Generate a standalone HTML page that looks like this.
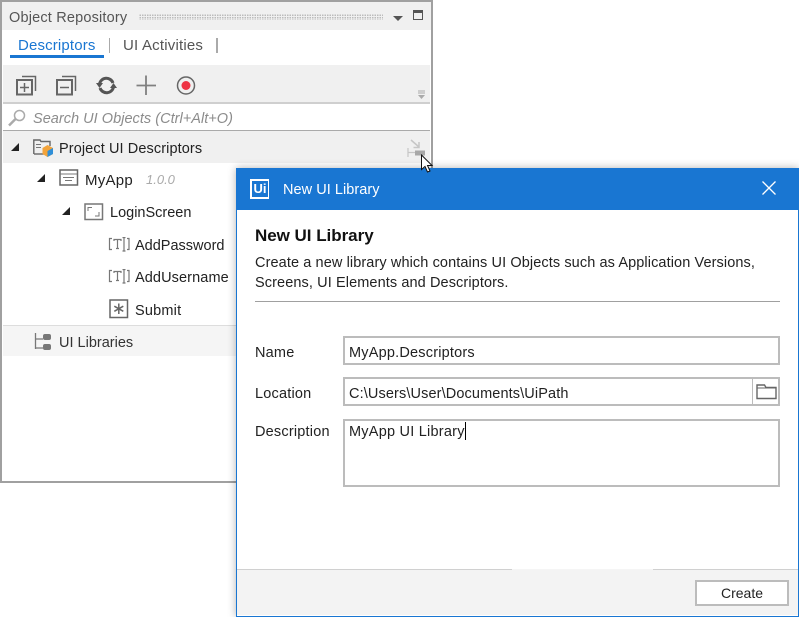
<!DOCTYPE html>
<html><head><meta charset="utf-8"><style>
html,body{margin:0;padding:0;background:#fff}
#p{position:relative;width:799px;height:617px;overflow:hidden;background:#fff;font-family:"Liberation Sans",sans-serif;font-size:14.5px;color:#1e1e1e}
#p div,#p svg{position:absolute}
.t{white-space:nowrap;line-height:18px}
.inp{background:#fff;border:2px solid #bcbcbc;box-sizing:border-box}
</style></head><body><div id="p">
<div style="left:0;top:0;width:433px;height:483px;box-sizing:border-box;border:2px solid #a0a0a0;background:#fff"></div>
<div style="left:2px;top:2px;width:429px;height:28px;background:#f0f0f0"></div>
<div class="t" style="left:9px;top:9px;color:#555;letter-spacing:.18px">Object Repository</div>
<div style="left:139px;top:14px;width:244px;height:6px;background-image:radial-gradient(#bbb .8px,transparent .9px);background-size:2.500px 2.500px"></div>
<svg style="left:393px;top:16px" width="11" height="6"><path d="M0 0H10L5 5Z" fill="#555"/></svg>
<div style="left:413px;top:10px;width:10px;height:10px;box-sizing:border-box;border:1.500px solid #555;border-top-width:3px"></div>
<div class="t" style="left:18px;top:37px;color:#1976d2;font-size:15px;letter-spacing:.15px">Descriptors</div>
<div style="left:10px;top:55px;width:94px;height:3px;background:#1976d2"></div>
<div style="left:109px;top:38px;width:1px;height:15px;background:#aaa"></div>
<div class="t" style="left:123px;top:37px;color:#555;font-size:15px;letter-spacing:.2px">UI Activities</div>
<div style="left:216px;top:38px;width:2px;height:15px;background:#aaa"></div>
<div style="left:3px;top:65px;width:427px;height:37px;background:#f0f0f0"></div>
<div style="left:3px;top:102px;width:427px;height:2px;background:#cfcfcf"></div>
<svg style="left:14px;top:73px" width="200" height="24" fill="none" stroke="#666">
<path d="M8 3.500H21.500V18" stroke-width="1.500"/><rect x="3" y="7" width="15" height="14.500" stroke-width="2"/><path d="M10.500 10V19M6 14.500H15" stroke-width="1.500"/>
<path d="M48 3.500H61.500V18" stroke-width="1.500"/><rect x="43" y="7" width="15" height="14.500" stroke-width="2"/><path d="M46 14.500H55" stroke-width="1.500"/>
<path d="M85.500 11A7 7 0 0 1 99 10M99.500 14A7 7 0 0 1 86 15" stroke-width="3" stroke="#555"/><path d="M82 10H89L85.500 15ZM96 15H103L99.500 10Z" fill="#555" stroke="none"/>
<path d="M132 2.500V22M122.500 12.500H142" stroke-width="1.800" stroke="#808080"/>
<circle cx="172" cy="12.500" r="8.500" stroke-width="1.500"/><circle cx="172" cy="12.500" r="4.500" fill="#ee3344" stroke="none"/>
</svg>
<svg style="left:417px;top:90px" width="9" height="9"><path d="M1 1H8M1 3H8" stroke="#aaa"/><path d="M1 5H8L4.500 9Z" fill="#aaa"/></svg>
<svg style="left:7px;top:108px" width="20" height="20" fill="none" stroke="#aaa"><circle cx="12.500" cy="7.500" r="5" stroke-width="1.500"/><path d="M8.500 11L2 17.500" stroke-width="2.500"/></svg>
<div class="t" style="left:33px;top:110px;color:#8c8c8c;font-style:italic;letter-spacing:.03px">Search UI Objects (Ctrl+Alt+O)</div>
<div style="left:3px;top:130px;width:427px;height:1px;background:#aaa"></div>
<div style="left:3px;top:131px;width:427px;height:32px;background:#f0f0f0"></div>
<svg style="left:11px;top:143px" width="9" height="9"><path d="M8 0V8H0Z" fill="#222"/></svg>
<svg style="left:33px;top:139px" width="22" height="18" fill="none"><path d="M.8 15V1H7L8 2.500H17V7" stroke="#666" stroke-width="1.400"/><path d="M1 15H11" stroke="#666" stroke-width="1.400"/><path d="M3 5.500H8M3 8.500H8" stroke="#777"/><path d="M14.500 6L20 9V15L14.500 18L9.500 15V9Z" fill="#f2a33a"/><path d="M14.500 12L20 9V15L14.500 18Z" fill="#2f8fd8"/></svg>
<div class="t" style="left:59px;top:140px;color:#222;letter-spacing:.1px">Project UI Descriptors</div>
<svg style="left:406px;top:138px" width="20" height="20" fill="none"><path d="M5 2L13 9M13 4V9.500H7.500" stroke="#c6c6c6" stroke-width="1.500"/><path d="M2 10V19M2 14.500H9" stroke="#c6c6c6" stroke-width="1.200"/><rect x="9" y="12.500" width="10" height="5" fill="#a8a8a8"/></svg>
<svg style="left:37px;top:174px" width="9" height="9"><path d="M8 0V8H0Z" fill="#222"/></svg>
<svg style="left:59px;top:169px" width="20" height="18" fill="none"><rect x="1" y="1" width="17.500" height="15" stroke="#666" stroke-width="1.500"/><path d="M1 5H18M4 8.500H15M6 11.500H13" stroke="#777"/></svg>
<div class="t" style="left:85px;top:172px;color:#222;font-size:15px;letter-spacing:.25px">MyApp</div>
<div class="t" style="left:146px;top:171px;color:#aaa;font-style:italic;font-size:13px">1.0.0</div>
<svg style="left:62px;top:207px" width="9" height="9"><path d="M8 0V8H0Z" fill="#222"/></svg>
<svg style="left:84px;top:203px" width="20" height="18" fill="none"><rect x="1" y="1" width="17.500" height="15.500" stroke="#777" stroke-width="1.500"/><path d="M8 4.500H4V8M15 9V13H11" stroke="#777"/></svg>
<div class="t" style="left:110px;top:204px;color:#222">LoginScreen</div>
<svg style="left:108px;top:237px" width="22" height="15" fill="none" stroke="#777" stroke-width="1.200"><path d="M4 1.500H1.500V12.500H4M19 1.500H21V12.500H19M6 4V2.500H13V4M9.500 2.500V11.500M8 11.500H11M16 .5V14M14.500 .5H17.500M14.500 14H17.500"/></svg>
<div class="t" style="left:135px;top:237px;color:#222">AddPassword</div>
<svg style="left:108px;top:269px" width="22" height="15" fill="none" stroke="#777" stroke-width="1.200"><path d="M4 1.500H1.500V12.500H4M19 1.500H21V12.500H19M6 4V2.500H13V4M9.500 2.500V11.500M8 11.500H11M16 .5V14M14.500 .5H17.500M14.500 14H17.500"/></svg>
<div class="t" style="left:135px;top:269px;color:#222;letter-spacing:.1px">AddUsername</div>
<svg style="left:109px;top:299px" width="20" height="20" fill="none"><rect x="1" y="1" width="17.500" height="17.500" stroke="#666" stroke-width="1.500"/><path d="M9.800 4.500V15M5.300 7.200L14.300 12.300M14.300 7.200L5.300 12.300" stroke="#666" stroke-width="1.500"/></svg>
<div class="t" style="left:135px;top:302px;color:#222;letter-spacing:.2px">Submit</div>
<div style="left:3px;top:325px;width:427px;height:31px;background:#f5f5f5;border-top:1px solid #ddd;box-sizing:border-box"></div>
<svg style="left:33px;top:333px" width="20" height="18" fill="none"><path d="M2.500 0V16M2.500 6H10M2.500 15H10" stroke="#777" stroke-width="1.300"/><rect x="10" y="1" width="8" height="6" rx="2" fill="#777"/><rect x="10" y="11" width="8" height="6" rx="2" fill="#777"/></svg>
<div class="t" style="left:59px;top:334px;color:#333">UI Libraries</div>

<div style="left:236px;top:168px;width:563px;height:449px;box-sizing:border-box;border:1px solid #1976d2;border-top:0;background:#fff;box-shadow:0 0 8px rgba(0,0,0,.3)"></div>
<div style="left:236px;top:168px;width:563px;height:42px;background:#1976d2"></div>
<div class="t" style="left:250px;top:179px;width:19px;height:20px;box-sizing:border-box;border:2px solid #fff;border-right-width:1.500px;color:#fff;font-size:13px;font-weight:bold;text-align:center;line-height:16px">Ui</div>
<div class="t" style="left:283px;top:181px;color:#fff;letter-spacing:.05px">New UI Library</div>
<svg style="left:761px;top:180px" width="16" height="16"><path d="M1.500 1.500L14.500 14.500M14.500 1.500L1.500 14.500" stroke="#fff" stroke-width="1.300"/></svg>
<div class="t" style="left:255px;top:227px;color:#111;font-size:17px;font-weight:bold;letter-spacing:-.03px">New UI Library</div>
<div class="t" style="left:255px;top:254px;color:#222;letter-spacing:.1px;width:520px">Create a new library which contains UI Objects such as Application Versions,</div>
<div class="t" style="left:255px;top:274px;color:#222;letter-spacing:.1px">Screens, UI Elements and Descriptors.</div>
<div style="left:255px;top:301px;width:525px;height:1px;background:#a0a0a0"></div>
<div class="t" style="left:255px;top:344px;color:#222;letter-spacing:.2px">Name</div>
<div class="inp" style="left:343px;top:336px;width:437px;height:29px"></div>
<div class="t" style="left:349px;top:344px;color:#222;letter-spacing:.2px">MyApp.Descriptors</div>
<div class="t" style="left:255px;top:385px;color:#222;letter-spacing:.2px">Location</div>
<div class="inp" style="left:343px;top:377px;width:437px;height:29px"></div>
<div style="left:752px;top:378px;width:1px;height:27px;background:#bcbcbc"></div>
<div class="t" style="left:349px;top:385px;color:#222;letter-spacing:.12px">C:\Users\User\Documents\UiPath</div>
<svg style="left:756px;top:384px" width="22" height="16" fill="none"><path d="M1 14.500V1H8.500L10 3.500H20V14.500Z" stroke="#666" stroke-width="1.400"/><path d="M1 4H20" stroke="#666"/></svg>
<div class="t" style="left:255px;top:423px;color:#222;letter-spacing:.2px">Description</div>
<div class="inp" style="left:343px;top:419px;width:437px;height:68px"></div>
<div class="t" style="left:349px;top:423px;color:#222;letter-spacing:.23px">MyApp UI Library</div>
<div style="left:465px;top:422px;width:1px;height:18px;background:#000"></div>
<div style="left:237px;top:569px;width:561px;height:46px;background:#f3f3f3;border-top:1px solid #d0d0d0;box-sizing:border-box"></div>
<div style="left:512px;top:569px;width:141px;height:1px;background:#f5f5f5"></div>
<div style="left:695px;top:580px;width:94px;height:26px;box-sizing:border-box;border:2px solid #bcbcbc;background:#fff;text-align:center;line-height:23px;color:#222;font-size:14px">Create</div>
<svg style="left:420px;top:154px" width="14" height="20"><path d="M1.500 1V15.500L5 12.500L7.500 18L10 17L7.500 11.500H12Z" fill="#fff" stroke="#111" stroke-width="1"/></svg>
</div></body></html>
